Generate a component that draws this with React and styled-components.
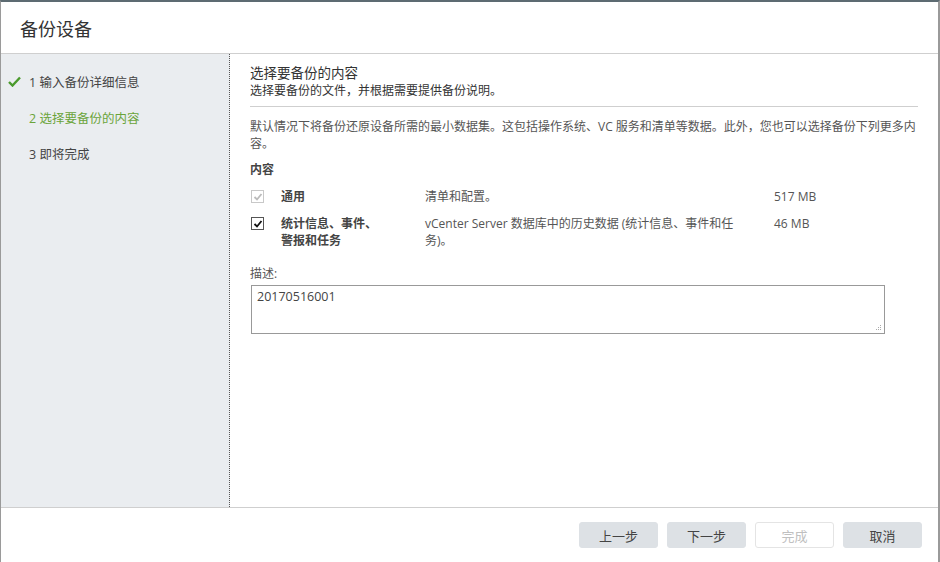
import React from 'react';
import styled, { createGlobalStyle } from 'styled-components';

const GlobalStyle = createGlobalStyle`
  html, body {
    margin: 0;
    padding: 0;
    background: #fff;
  }
  body {
    font-family: "Open Sans", "Noto Sans CJK SC", sans-serif;
    color: #333;
  }
`;

const Dialog = styled.div`
  width: 940px;
  height: 562px;
  box-sizing: border-box;
  display: flex;
  flex-direction: column;
  border-top: 2px solid #5d6b72;
  border-left: 1px solid #9a9a9a;
  border-right: 2px solid #9a9a9a;
  background: #fff;
  overflow: hidden;
`;

const Header = styled.div`
  height: 51px;
  flex: none;
  display: flex;
  align-items: center;
  padding-left: 19px;
  border-bottom: 1px solid #cfcfcf;
  font-size: 18px;
  color: #333;
`;

const Body = styled.div`
  flex: 1;
  display: flex;
  min-height: 0;
`;

const Sidebar = styled.div`
  width: 229px;
  flex: none;
  background: #eaedf0;
  border-right: 1px dotted #555;
  padding-top: 9px;
  box-sizing: border-box;
`;

const Step = styled.div`
  height: 36px;
  display: flex;
  align-items: center;
  font-size: 12.5px;
  color: ${(p) => (p.active ? '#6ba43a' : '#444')};
  padding-left: ${(p) => (p.done ? '7px' : '28px')};
  gap: 8px;
`;

const Main = styled.div`
  flex: 1;
  padding: 10px 20px 0 20px;
  font-size: 12px;
  color: #444;
`;

const Heading = styled.div`
  font-size: 13.5px;
  color: #333;
  line-height: 18px;
`;

const Sub = styled.div`
  font-size: 12px;
  line-height: 18px;
  color: #333;
`;

const Rule = styled.div`
  height: 1px;
  background: #cfcfcf;
  margin: 6px 0 11px;
`;

const Para = styled.p`
  margin: 0;
  font-size: 12px;
  line-height: 17px;
  color: #555;
`;

const SectionLabel = styled.div`
  font-weight: bold;
  font-size: 12px;
  color: #444;
  margin-top: 9px;
  line-height: 17px;
`;

const Row = styled.div`
  display: grid;
  grid-template-columns: 31px 144px 349px 1fr;
  align-items: start;
  margin-top: ${(p) => p.top}px;
  line-height: 17px;
`;

const Box = styled.span`
  width: 13px;
  height: 13px;
  box-sizing: border-box;
  border: 1px solid ${(p) => (p.disabled ? '#c8c8c8' : '#555')};
  background: #fff;
  display: flex;
  align-items: center;
  justify-content: center;
  margin-top: 2px;
  margin-left: 1px;
`;

const ItemName = styled.div`
  font-weight: bold;
  color: #444;
  width: 100px;
`;

const ItemDesc = styled.div`
  width: 320px;
  color: #555;
`;

const ItemSize = styled.div`
  color: #555;
`;

const FieldLabel = styled.div`
  margin-top: 16px;
  line-height: 17px;
  color: #555;
`;

const TextArea = styled.div`
  width: 634px;
  height: 49px;
  box-sizing: border-box;
  border: 1px solid #999;
  margin-top: 3px;
  margin-left: 1px;
  padding: 2px 5px;
  font-size: 12.5px;
  color: #444;
  position: relative;
`;

const Grip = styled.svg`
  position: absolute;
  right: 2px;
  bottom: 2px;
`;

const Footer = styled.div`
  height: 55px;
  flex: none;
  border-top: 1px solid #cfcfcf;
  display: flex;
  align-items: center;
  justify-content: flex-end;
  gap: 9px;
  padding-right: 16px;
  box-sizing: border-box;
`;

const Button = styled.button`
  width: 79px;
  height: 26px;
  border-radius: 3px;
  border: 1px solid ${(p) => (p.disabled ? '#e4e4e4' : '#dde1e5')};
  background: ${(p) => (p.disabled ? '#fff' : '#dde1e5')};
  color: ${(p) => (p.disabled ? '#c0c0c0' : '#444')};
  font-family: inherit;
  font-size: 13px;
  padding: 0;
`;

const Check = ({ color = '#333', size = 10 }) => (
  <svg width={size} height={size} viewBox="0 0 10 10">
    <path d="M1.5 5 L4 7.5 L8.5 2" fill="none" stroke={color} strokeWidth="1.8" />
  </svg>
);

const App = () => (
  <>
    <GlobalStyle />
    <Dialog>
      <Header>备份设备</Header>
      <Body>
        <Sidebar>
          <Step done>
            <svg width="13" height="11" viewBox="0 0 13 11">
              <path d="M1 6 L4.5 9.5 L12 1.5" fill="none" stroke="#4a9a2c" strokeWidth="2.4" />
            </svg>
            <span>1 输入备份详细信息</span>
          </Step>
          <Step active>2 选择要备份的内容</Step>
          <Step>3 即将完成</Step>
        </Sidebar>
        <Main>
          <Heading>选择要备份的内容</Heading>
          <Sub>选择要备份的文件，并根据需要提供备份说明。</Sub>
          <Rule />
          <Para>
            默认情况下将备份还原设备所需的最小数据集。这包括操作系统、VC 服务和清单等数据。此外，您也可以选择备份下列更多内容。
          </Para>
          <SectionLabel>内容</SectionLabel>
          <Row top={10}>
            <Box disabled>
              <Check color="#bbb" />
            </Box>
            <ItemName>通用</ItemName>
            <ItemDesc>清单和配置。</ItemDesc>
            <ItemSize>517 MB</ItemSize>
          </Row>
          <Row top={10}>
            <Box>
              <Check color="#111" />
            </Box>
            <ItemName>统计信息、事件、警报和任务</ItemName>
            <ItemDesc>vCenter Server 数据库中的历史数据 (统计信息、事件和任务)。</ItemDesc>
            <ItemSize>46 MB</ItemSize>
          </Row>
          <FieldLabel>描述:</FieldLabel>
          <TextArea>
            20170516001
            <Grip width="6" height="6" viewBox="0 0 6 6">
              <rect x="4" y="0" width="1" height="1" fill="#aaa" />
              <rect x="2" y="2" width="1" height="1" fill="#aaa" />
              <rect x="4" y="2" width="1" height="1" fill="#aaa" />
              <rect x="0" y="4" width="1" height="1" fill="#aaa" />
              <rect x="2" y="4" width="1" height="1" fill="#aaa" />
              <rect x="4" y="4" width="1" height="1" fill="#aaa" />
            </Grip>
          </TextArea>
        </Main>
      </Body>
      <Footer>
        <Button>上一步</Button>
        <Button>下一步</Button>
        <Button disabled>完成</Button>
        <Button>取消</Button>
      </Footer>
    </Dialog>
  </>
);

export default App;
